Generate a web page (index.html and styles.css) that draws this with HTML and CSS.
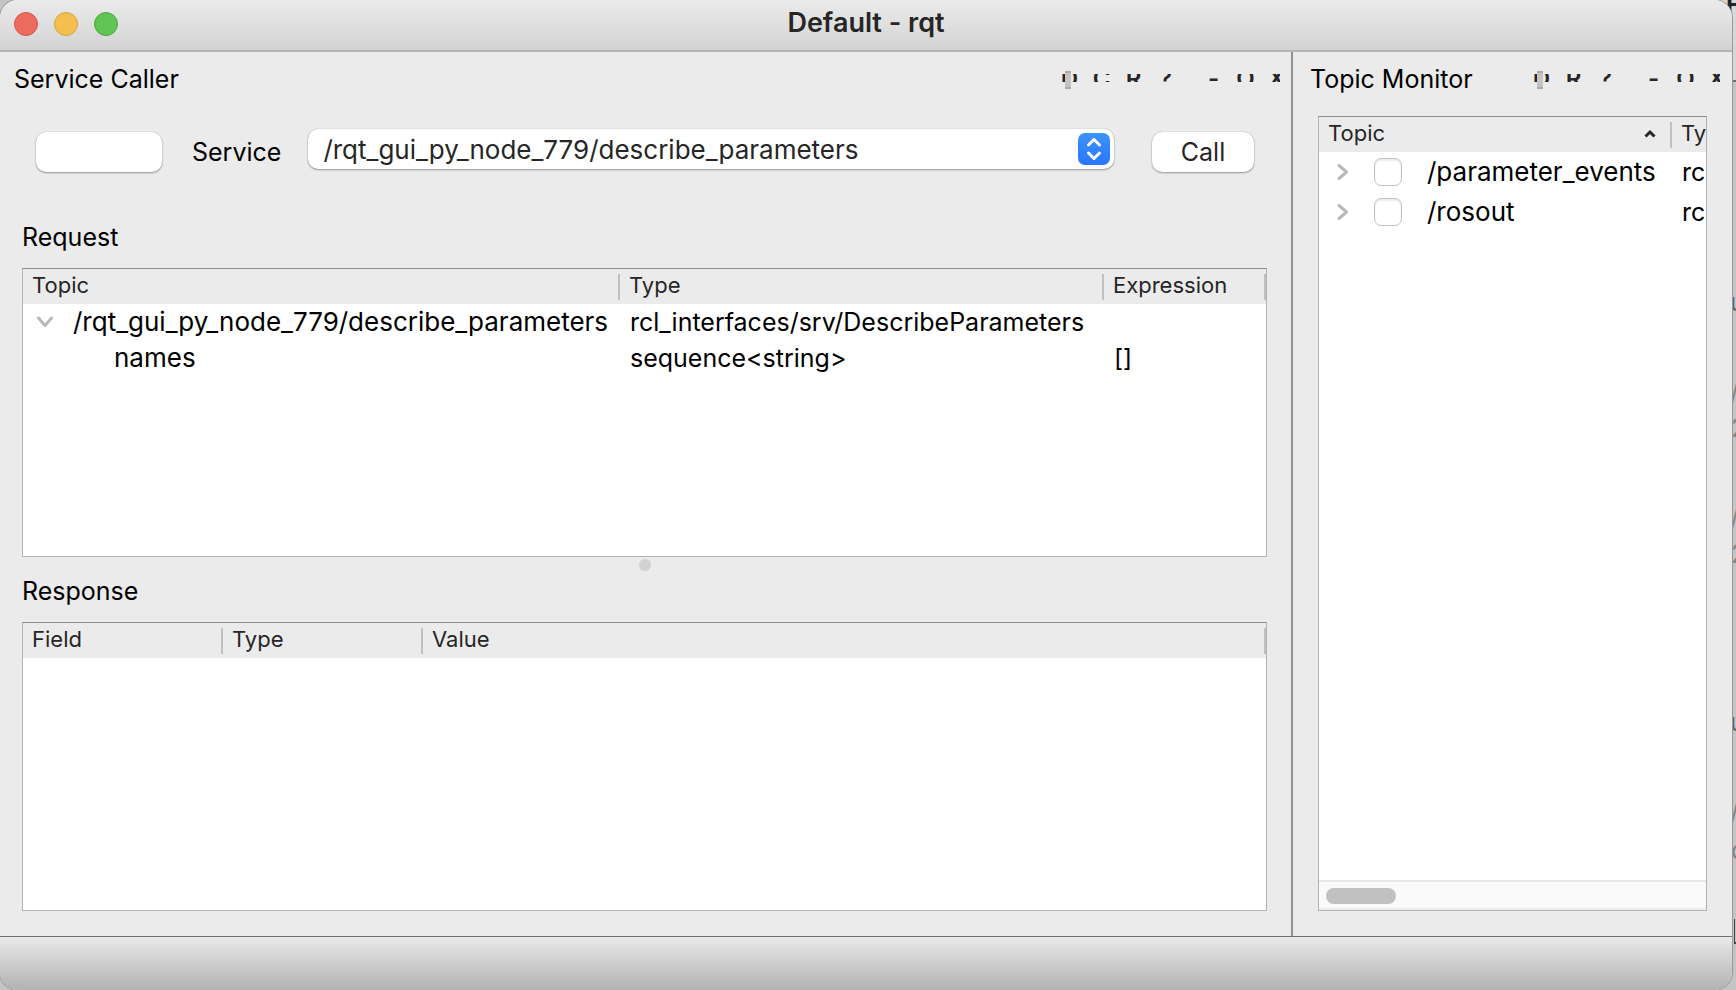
FILE: index.html
```html
<!DOCTYPE html>
<html lang="en">
<head>
<meta charset="utf-8">
<title>Default - rqt</title>
<link rel="stylesheet" href="styles.css">
</head>
<body>
<div class="behind" aria-hidden="true">
  <span class="behind-bar"></span>
  <span class="bit bit-f">F</span>
  <span class="bit bit-u1">u</span>
  <span class="bit bit-s1">/</span>
  <span class="bit bit-n1">2</span>
  <span class="bit bit-s2">/</span>
  <span class="bit bit-n2">2</span>
  <span class="bit bit-u2">u</span>
  <span class="bit bit-s3">/</span>
  <span class="bit bit-d">d</span>
  <span class="behind-corner"></span>
</div>
<div class="window">
  <header class="titlebar">
    <div class="lights">
      <button class="light light-close" aria-label="Close"></button>
      <button class="light light-min" aria-label="Minimize"></button>
      <button class="light light-max" aria-label="Zoom"></button>
    </div>
    <h1 class="title">Default - rqt</h1>
  </header>
  <main class="docks">
    <section class="dock">
      <div class="dock-head">
        <h2 class="label">Service Caller</h2>
        <div class="dock-tools">
          <button class="tool tool-grip"><span>D</span></button>
          <button class="tool"><span>C</span></button>
          <button class="tool"><span>R</span></button>
          <button class="tool"><span>?</span></button>
          <button class="tool tool-dash"><span>-</span></button>
          <button class="tool"><span>O</span></button>
          <button class="tool tool-x"><span>X</span></button>
        </div>
      </div>
      <div class="caller">
        <button class="push push-blank" aria-label="Refresh"></button>
        <label class="label" for="service">Service</label>
        <div class="combo">
          <select id="service"><option>/rqt_gui_py_node_779/describe_parameters</option></select>
          <svg class="combo-arrows" viewBox="0 0 32 32" width="32" height="32">
            <defs><linearGradient id="blue" x1="0" y1="0" x2="0" y2="1"><stop offset="0" stop-color="#3d93fb"/><stop offset="1" stop-color="#2876fb"/></linearGradient></defs>
            <rect width="32" height="32" rx="7" fill="url(#blue)"/>
            <path d="M10.500 12l5.500-5.500 5.500 5.500M10.500 20l5.500 5.500 5.500-5.500" fill="none" stroke="#fff" stroke-width="3" stroke-linecap="round" stroke-linejoin="round"/>
          </svg>
        </div>
        <button class="push push-call">Call</button>
      </div>
      <div class="panel">
        <h3 class="label">Request</h3>
        <div class="view">
          <table>
            <colgroup><col class="c-topic"><col class="c-type"><col></colgroup>
            <thead><tr><th>Topic</th><th>Type</th><th>Expression</th></tr></thead>
            <tbody>
              <tr><td><div class="cell cell-root"><svg class="chevron" viewBox="0 0 18 12" width="18" height="12"><path d="M2.500 2l6.500 7.500 6.500-7.500"/></svg>/rqt_gui_py_node_779/describe_parameters</div></td><td>rcl_interfaces/srv/DescribeParameters</td><td></td></tr>
              <tr><td><div class="cell cell-child">names</div></td><td>sequence&lt;string&gt;</td><td>[]</td></tr>
            </tbody>
          </table>
        </div>
      </div>
      <div class="splitter"><span class="splitter-dot"></span></div>
      <div class="panel">
        <h3 class="label">Response</h3>
        <div class="view">
          <table>
            <colgroup><col class="c-field"><col class="c-kind"><col></colgroup>
            <thead><tr><th>Field</th><th>Type</th><th>Value</th></tr></thead>
          </table>
        </div>
      </div>
    </section>
    <section class="dock dock-right">
      <div class="dock-head">
        <h2 class="label">Topic Monitor</h2>
        <div class="dock-tools">
          <button class="tool tool-grip"><span>D</span></button>
          <button class="tool"><span>R</span></button>
          <button class="tool"><span>?</span></button>
          <button class="tool tool-dash"><span>-</span></button>
          <button class="tool"><span>O</span></button>
          <button class="tool tool-x"><span>X</span></button>
        </div>
      </div>
      <div class="view monitor">
        <table>
          <colgroup><col class="c-monitor"><col></colgroup>
          <thead><tr><th><div class="sorted">Topic<svg viewBox="0 0 14 10" width="14" height="10"><path d="M2.500 7.500l4.500-4.500 4.500 4.500"/></svg></div></th><th>Ty</th></tr></thead>
          <tbody>
            <tr><td><div class="cell cell-check"><svg class="chevron" viewBox="0 0 12 18" width="12" height="18"><path d="M2 2.500l7.500 6.500-7.500 6.500"/></svg><input type="checkbox" id="t1"><label for="t1">/parameter_events</label></div></td><td>rc</td></tr>
            <tr><td><div class="cell cell-check"><svg class="chevron" viewBox="0 0 12 18" width="12" height="18"><path d="M2 2.500l7.500 6.500-7.500 6.500"/></svg><input type="checkbox" id="t2"><label for="t2">/rosout</label></div></td><td>rc</td></tr>
          </tbody>
        </table>
        <div class="scrollbar"><span class="scroll-thumb"></span></div>
      </div>
    </section>
  </main>
  <footer class="status"></footer>
</div>
</body>
</html>
```
FILE: styles.css
```css
* { box-sizing: border-box; }
body {
  margin: 0;
  height: 100vh;
  padding-right: 4px;
  overflow: hidden;
  position: relative;
  background: #c4c4c4;
  font-family: Inter, "Liberation Sans", sans-serif;
  font-size: 25px;
  line-height: 36px;
  color: #000;
}
button, select, input { font: inherit; margin: 0; padding: 0; border: 0; }
h1, h2, h3 { margin: 0; font: inherit; }

/* Slice of the window underneath */
.behind { position: absolute; inset: 0 0 0 auto; width: 24px; overflow: hidden; color: #858585; }
.behind-bar { position: absolute; inset: 0 0 auto 0; height: 82px; background: #d8d8d8; border-bottom: 2px solid #707070; }
.bit { position: absolute; left: 18px; line-height: 24px; }
.bit-f { top: -8px; left: 14px; color: #222; font-weight: 700; }
.bit-u1 { top: 290px; color: #606060; }
.bit-s1 { top: 380px; }
.bit-n1 { top: 416px; left: 19px; }
.bit-s2 { top: 506px; }
.bit-n2 { top: 542px; left: 19px; }
.bit-u2 { top: 710px; color: #606060; }
.bit-s3 { top: 800px; }
.bit-d { top: 838px; left: 19px; }
.behind-corner { position: absolute; right: 0; top: 919px; width: 2px; height: 25px; border-left: 1px solid #444; border-bottom: 2px solid #444; }

.window {
  position: relative;
  height: 100%;
  display: flex;
  flex-direction: column;
  background: #ebebeb;
  border-radius: 18px;
  overflow: hidden;
  box-shadow: 0 0 0 1px #999;
}
.titlebar {
  position: relative;
  flex: none;
  height: 52px;
  display: flex;
  align-items: center;
  justify-content: center;
  padding-bottom: 4px;
  background: linear-gradient(#ebebeb, #d3d3d3);
  border-bottom: 2px solid #b5b5b5;
}
.lights { position: absolute; left: 14px; top: 12px; display: flex; gap: 16px; }
.light { width: 24px; height: 24px; border-radius: 50%; border: 1px solid; }
.light-close { background: #ed6a5e; border-color: #d5554b; }
.light-min { background: #f5bf4f; border-color: #d9a03c; }
.light-max { background: #61c554; border-color: #4ca73d; }
.title { font-size: 27px; font-weight: 600; color: #262626; }

.docks { flex: 1; min-height: 0; display: grid; grid-template-columns: 1293fr 439fr; }
.dock { display: flex; flex-direction: column; min-width: 0; padding: 9px 24px 25px 22px; border-right: 2px solid #929292; }
.dock-right { border-right: 0; padding: 9px 25px 25px; }
.dock-head { display: flex; justify-content: space-between; align-items: center; margin: 0 -13px 0 -8px; }
.dock-tools { display: flex; gap: 13px; margin-bottom: 2px; }
.tool { width: 19px; height: 14px; background: none; color: #262626; position: relative; display: flex; align-items: center; justify-content: center; font-size: 24px; }
.tool span { display: block; height: 8px; line-height: 10px; overflow: hidden; font-weight: 600; }
.tool-grip::after { content: ""; position: absolute; left: 5px; top: 0; width: 6px; height: 14px; background: #c4c4c4; border: solid #aaa; border-width: 2px 0; }
.tool-dash { margin-left: 16px; }
.tool-x { width: 12px; }

.caller { display: flex; align-items: center; height: 110px; margin-bottom: 12px; padding: 0 13px 0 14px; }
.push { height: 40px; border-radius: 10px; background: #fff; color: #262626; box-shadow: 0 1px 2px rgba(0,0,0,.35), 0 0 1px rgba(0,0,0,.3); }
.push-blank { width: 126px; margin-right: 30px; }
.push-call { width: 102px; }
.combo { position: relative; flex: 1; margin: 0 38px 6px 27px; }
.combo select { display: block; width: 100%; height: 40px; padding: 2px 48px 0 15px; appearance: none; border-radius: 10px; background: #fff; color: #262626; font-size: 26px; line-height: 38px; box-shadow: 0 1px 2px rgba(0,0,0,.35), 0 0 1px rgba(0,0,0,.3); }
.combo-arrows { position: absolute; right: 4px; top: 4px; pointer-events: none; }

.panel { flex: 1; min-height: 0; display: flex; flex-direction: column; }
.panel .label { margin: 0 0 13px; }
.view { flex: 1; min-height: 0; overflow: hidden; background: #fff; border: 1px solid #b2b2b2; border-top-color: #8c8c8c; }
.splitter { height: 16px; display: flex; justify-content: center; align-items: center; }
.splitter-dot { width: 12px; height: 12px; border-radius: 50%; background: #d2d2d2; }

table { width: 100%; table-layout: fixed; border-collapse: collapse; }
th { height: 35px; padding: 0 0 2px 9px; text-align: left; font-weight: 400; font-size: 22px; line-height: 33px; color: #262626; background: #ebebeb linear-gradient(#c0c0c0, #c0c0c0) no-repeat right center / 2px 26px; }
td { height: 36px; padding: 0 0 0 10px; white-space: nowrap; }
td:first-child { padding-left: 0; font-size: 26px; }
.c-topic { width: 597px; }
.c-type { width: 484px; }
.c-field, .c-kind { width: 200px; }
.c-monitor { width: 353px; }
.cell { display: flex; align-items: center; }
.cell-root { padding-left: 13px; gap: 19px; }
.cell-child { padding-left: 91px; }
.chevron { flex: none; fill: none; stroke: #b9b9b9; stroke-width: 3; stroke-linecap: round; stroke-linejoin: round; }
.sorted { display: flex; align-items: center; justify-content: space-between; padding-right: 15px; }
.sorted svg { fill: none; stroke: #262626; stroke-width: 3; }

.monitor { display: flex; flex-direction: column; margin-top: 19px; }
.monitor th:last-child { background-image: none; }
.monitor td { height: 40px; }
.cell-check { padding-left: 18px; }
.cell-check input { appearance: none; width: 28px; height: 28px; margin: 0 25px; border: 1px solid #c2c2c2; border-radius: 7px; background: #fff; box-shadow: inset 0 2px 2px rgba(0,0,0,.08); }
.scrollbar { margin-top: auto; height: 30px; padding: 6px 7px; background: #fafafa; border-top: 2px solid #e7e7e7; border-bottom: 2px solid #eee; }
.scroll-thumb { display: block; width: 70px; height: 16px; border-radius: 8px; background: #c1c1c1; }
.status { flex: none; height: 54px; border-top: 1px solid #707070; background: linear-gradient(#e9e9e9, #b2b2b2); }
```
